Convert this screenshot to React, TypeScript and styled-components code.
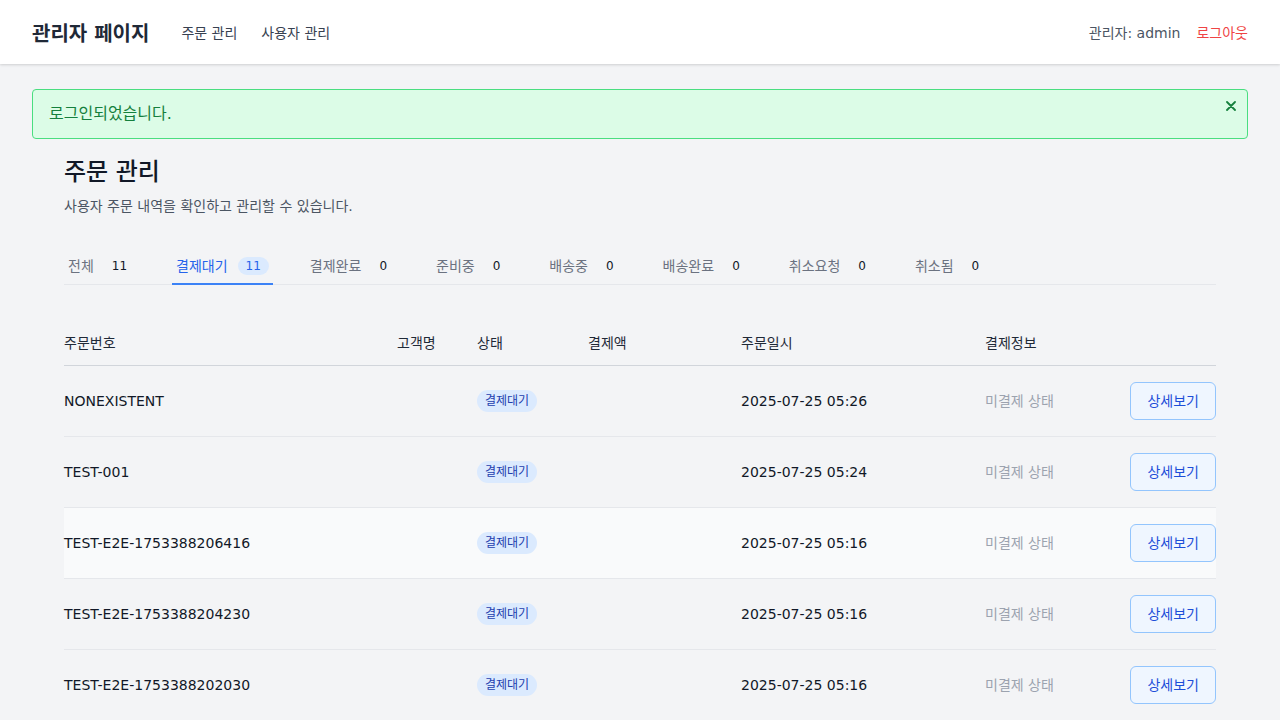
import React from "react";
import styled, { createGlobalStyle } from "styled-components";

const GlobalStyle = createGlobalStyle`
  * { box-sizing: border-box; }
  body {
    margin: 0;
    background: #f3f4f6;
    font-family: "DejaVu Sans", "Noto Sans CJK KR", sans-serif;
    color: #111827;
  }
`;

const Header = styled.header`
  height: 64px;
  background: #ffffff;
  box-shadow: 0 1px 3px rgba(0, 0, 0, 0.1), 0 1px 2px rgba(0, 0, 0, 0.06);
  display: flex;
  align-items: center;
  justify-content: space-between;
  padding: 0 32px;
`;

const Left = styled.div`
  display: flex;
  align-items: center;
`;

const Logo = styled.div`
  font-size: 20px;
  font-weight: 600;
  color: #1f2937;
  margin-right: 32px;
`;

const Nav = styled.nav`
  display: flex;
  gap: 24px;
`;

const NavLink = styled.a`
  font-size: 14px;
  color: #374151;
  text-decoration: none;
`;

const Right = styled.div`
  display: flex;
  align-items: center;
  gap: 16px;
  font-size: 14px;
`;

const UserText = styled.span`
  color: #4b5563;
`;

const Logout = styled.a`
  color: #ef4444;
`;

const Main = styled.main`
  padding: 25px 32px 0;
`;

const Alert = styled.div`
  background: #dcfce7;
  border: 1px solid #4ade80;
  border-radius: 4px;
  padding: 12px 7px 12px 16px;
  display: flex;
  justify-content: space-between;
  align-items: flex-start;
  color: #15803d;
  font-size: 16px;
  line-height: 24px;
`;

const CloseBtn = styled.button`
  border: none;
  background: none;
  padding: 0;
  margin-top: -5px;
  width: 18px;
  height: 18px;
  display: flex;
  align-items: center;
  justify-content: center;
  color: #15803d;
  cursor: pointer;
`;

const Content = styled.section`
  padding: 17px 32px 0;
`;

const Title = styled.h1`
  margin: 0;
  font-size: 24px;
  line-height: 32px;
  font-weight: 500;
  color: #111827;
`;

const Subtitle = styled.p`
  margin: 8px 0 0;
  font-size: 14px;
  line-height: 20px;
  color: #4b5563;
`;

const Tabs = styled.div`
  margin-top: 32px;
  display: flex;
  gap: 33px;
  border-bottom: 1px solid #e5e7eb;
`;

const Tab = styled.button<{ $active?: boolean }>`
  border: none;
  background: none;
  font-family: inherit;
  padding: 8px 4px 7px;
  margin-bottom: -1px;
  border-bottom: 2px solid ${(p) => (p.$active ? "#3b82f6" : "transparent")};
  display: flex;
  align-items: center;
  font-size: 14px;
  line-height: 20px;
  color: ${(p) => (p.$active ? "#2563eb" : "#6b7280")};
  cursor: pointer;
`;

const Count = styled.span<{ $active?: boolean }>`
  margin-left: 10px;
  padding: 1px 8px;
  border-radius: 9999px;
  font-size: 12px;
  line-height: 16px;
  background: ${(p) => (p.$active ? "#dbeafe" : "transparent")};
  color: ${(p) => (p.$active ? "#2563eb" : "#111827")};
`;

const Table = styled.div`
  margin-top: 36px;
`;

const cols = "333px 80px 111px 153px 244px 1fr auto";

const HeadRow = styled.div`
  display: grid;
  grid-template-columns: ${cols};
  align-items: center;
  padding: 12px 0;
  border-bottom: 1px solid #d1d5db;
`;

const HeadCell = styled.div`
  font-size: 14px;
  line-height: 20px;
  color: #1f2937;
`;

const Row = styled.div<{ $hover?: boolean }>`
  display: grid;
  grid-template-columns: ${cols};
  align-items: center;
  padding: 16px 0;
  border-bottom: 1px solid #e5e7eb;
  background: ${(p) => (p.$hover ? "#f9fafb" : "transparent")};
`;

const Cell = styled.div<{ $muted?: boolean }>`
  font-size: 14px;
  line-height: 20px;
  color: ${(p) => (p.$muted ? "#9ca3af" : "#111827")};
`;

const Badge = styled.span`
  display: inline-block;
  padding: 3px 8px;
  border-radius: 9999px;
  background: #dbeafe;
  color: #1e40af;
  font-size: 12px;
  line-height: 16px;
`;

const DetailButton = styled.button`
  border: 1px solid #93c5fd;
  background: #eff6ff;
  color: #1d4ed8;
  border-radius: 6px;
  padding: 8px 16px;
  font-family: inherit;
  font-size: 14px;
  line-height: 20px;
  cursor: pointer;
`;

const tabs = [
  { label: "전체", count: 11 },
  { label: "결제대기", count: 11, active: true },
  { label: "결제완료", count: 0 },
  { label: "준비중", count: 0 },
  { label: "배송중", count: 0 },
  { label: "배송완료", count: 0 },
  { label: "취소요청", count: 0 },
  { label: "취소됨", count: 0 },
];

const orders = [
  { id: "NONEXISTENT", date: "2025-07-25 05:26" },
  { id: "TEST-001", date: "2025-07-25 05:24" },
  { id: "TEST-E2E-1753388206416", date: "2025-07-25 05:16", hover: true },
  { id: "TEST-E2E-1753388204230", date: "2025-07-25 05:16" },
  { id: "TEST-E2E-1753388202030", date: "2025-07-25 05:16" },
];

export default function App() {
  return (
    <>
      <GlobalStyle />
      <Header>
        <Left>
          <Logo>관리자 페이지</Logo>
          <Nav>
            <NavLink href="#">주문 관리</NavLink>
            <NavLink href="#">사용자 관리</NavLink>
          </Nav>
        </Left>
        <Right>
          <UserText>관리자: admin</UserText>
          <Logout>로그아웃</Logout>
        </Right>
      </Header>
      <Main>
        <Alert>
          <span>로그인되었습니다.</span>
          <CloseBtn aria-label="닫기">
            <svg width="10" height="10" viewBox="0 0 10 10">
              <path d="M1 1 L9 9 M9 1 L1 9" stroke="currentColor" strokeWidth="1.8" strokeLinecap="round" />
            </svg>
          </CloseBtn>
        </Alert>
        <Content>
          <Title>주문 관리</Title>
          <Subtitle>사용자 주문 내역을 확인하고 관리할 수 있습니다.</Subtitle>
          <Tabs>
            {tabs.map((t) => (
              <Tab key={t.label} $active={t.active}>
                {t.label}
                <Count $active={t.active}>{t.count}</Count>
              </Tab>
            ))}
          </Tabs>
          <Table>
            <HeadRow>
              <HeadCell>주문번호</HeadCell>
              <HeadCell>고객명</HeadCell>
              <HeadCell>상태</HeadCell>
              <HeadCell>결제액</HeadCell>
              <HeadCell>주문일시</HeadCell>
              <HeadCell>결제정보</HeadCell>
              <HeadCell />
            </HeadRow>
            {orders.map((o) => (
              <Row key={o.id} $hover={o.hover}>
                <Cell>{o.id}</Cell>
                <Cell />
                <Cell>
                  <Badge>결제대기</Badge>
                </Cell>
                <Cell />
                <Cell>{o.date}</Cell>
                <Cell $muted>미결제 상태</Cell>
                <Cell>
                  <DetailButton>상세보기</DetailButton>
                </Cell>
              </Row>
            ))}
          </Table>
        </Content>
      </Main>
    </>
  );
}
